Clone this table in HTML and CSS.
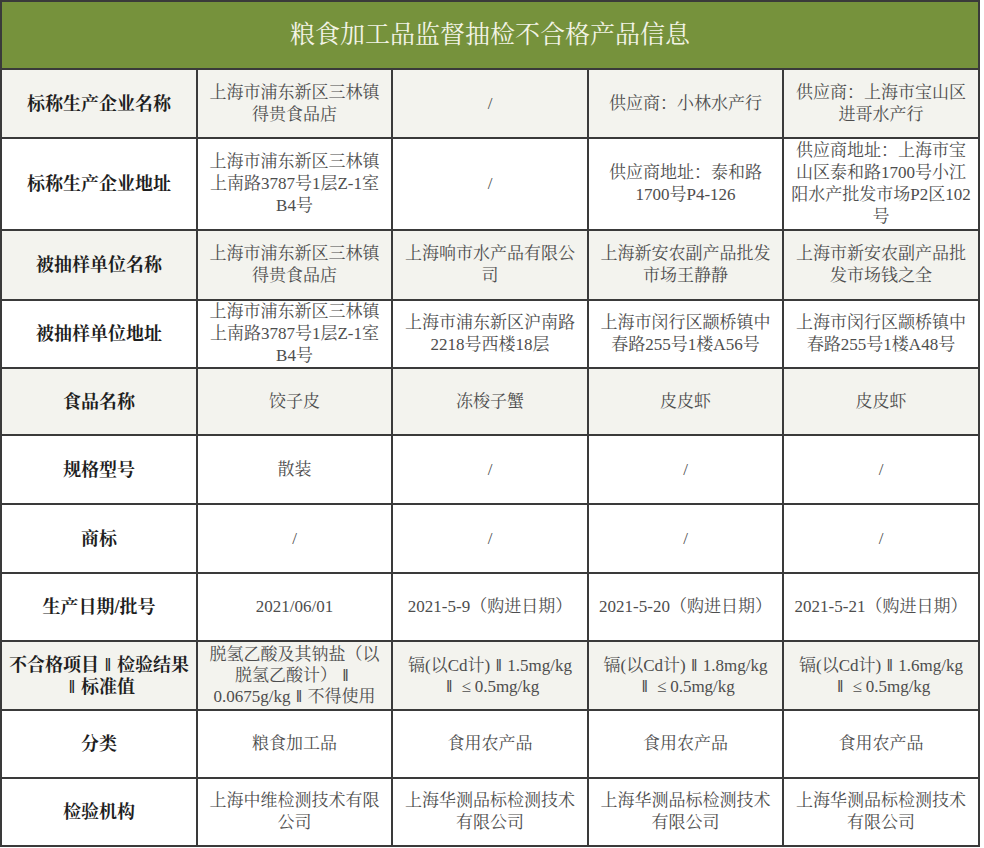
FILE: index.html
```html
<!DOCTYPE html>
<html lang="zh-CN">
<head>
<meta charset="utf-8">
<title>粮食加工品监督抽检不合格产品信息</title>
<link rel="stylesheet" href="styles.css">
</head>
<body>
<table class="sheet">
  <colgroup>
    <col class="c1"><col class="c2"><col class="c3"><col class="c4"><col class="c5">
  </colgroup>
  <thead>
    <tr class="r-title"><th colspan="5" class="title">粮食加工品监督抽检不合格产品信息</th></tr>
  </thead>
  <tbody>
    <tr class="r69 shade">
      <th>标称生产企业名称</th>
      <td>上海市浦东新区三林镇得贵食品店</td>
      <td class="slash">/</td>
      <td>供应商：小林水产行</td>
      <td>供应商：上海市宝山区进哥水产行</td>
    </tr>
    <tr class="r92">
      <th>标称生产企业地址</th>
      <td>上海市浦东新区三林镇上南路3787号1层Z-1室B4号</td>
      <td class="slash">/</td>
      <td>供应商地址：泰和路1700号P4-126</td>
      <td>供应商地址：上海市宝山区泰和路1700号小江阳水产批发市场P2区102号</td>
    </tr>
    <tr class="r70 shade">
      <th>被抽样单位名称</th>
      <td>上海市浦东新区三林镇得贵食品店</td>
      <td>上海响市水产品有限公司</td>
      <td>上海新安农副产品批发市场王静静</td>
      <td>上海市新安农副产品批发市场钱之全</td>
    </tr>
    <tr class="r68">
      <th>被抽样单位地址</th>
      <td>上海市浦东新区三林镇上南路3787号1层Z-1室B4号</td>
      <td>上海市浦东新区沪南路2218号西楼18层</td>
      <td>上海市闵行区颛桥镇中春路255号1楼A56号</td>
      <td>上海市闵行区颛桥镇中春路255号1楼A48号</td>
    </tr>
    <tr class="r67 shade">
      <th>食品名称</th>
      <td>饺子皮</td>
      <td>冻梭子蟹</td>
      <td>皮皮虾</td>
      <td>皮皮虾</td>
    </tr>
    <tr class="r69">
      <th>规格型号</th>
      <td>散装</td>
      <td class="slash">/</td>
      <td class="slash">/</td>
      <td class="slash">/</td>
    </tr>
    <tr class="r69">
      <th>商标</th>
      <td class="slash">/</td>
      <td class="slash">/</td>
      <td class="slash">/</td>
      <td class="slash">/</td>
    </tr>
    <tr class="r68">
      <th>生产日期/批号</th>
      <td>2021/06/01</td>
      <td>2021-5-9（购进日期）</td>
      <td>2021-5-20（购进日期）</td>
      <td>2021-5-21（购进日期）</td>
    </tr>
    <tr class="r69 shade tight">
      <th>不合格项目<span class="bar">‖</span>检验结果<span class="nw"><span class="bar">‖</span>标准值</span></th>
      <td>脱氢乙酸及其钠盐（以脱氢乙酸计）<span class="bar">‖</span><span class="nw">0.0675g/kg<span class="bar">‖</span></span>不得使用</td>
      <td><span class="nw">镉(以Cd计)<span class="bar">‖</span>1.5mg/kg</span> <span class="nw"><span class="bar">‖</span><span class="op">≤</span>0.5mg/kg</span></td>
      <td><span class="nw">镉(以Cd计)<span class="bar">‖</span>1.8mg/kg</span> <span class="nw"><span class="bar">‖</span><span class="op">≤</span>0.5mg/kg</span></td>
      <td><span class="nw">镉(以Cd计)<span class="bar">‖</span>1.6mg/kg</span> <span class="nw"><span class="bar">‖</span><span class="op">≤</span>0.5mg/kg</span></td>
    </tr>
    <tr class="r68">
      <th>分类</th>
      <td>粮食加工品</td>
      <td>食用农产品</td>
      <td>食用农产品</td>
      <td>食用农产品</td>
    </tr>
    <tr class="r68">
      <th>检验机构</th>
      <td>上海中维检测技术有限公司</td>
      <td>上海华测品标检测技术有限公司</td>
      <td>上海华测品标检测技术有限公司</td>
      <td>上海华测品标检测技术有限公司</td>
    </tr>
  </tbody>
</table>
</body>
</html>
```

FILE: styles.css
```css
html, body {
  margin: 0;
  padding: 0;
  background: #ffffff;
}

body {
  font-family: "Liberation Serif", "Noto Serif CJK SC", "Noto Sans CJK SC", serif;
}

.sheet {
  border-collapse: collapse;
  table-layout: fixed;
  width: 979px;
  margin: 0;
}

.c1 { width: 196px; }
.c2 { width: 195px; }
.c3 { width: 196px; }
.c4 { width: 195px; }
.c5 { width: 196px; }

.sheet th,
.sheet td {
  border: 2px solid #3a3a3a;
  text-align: center;
  vertical-align: middle;
  padding: 0 6px;
  line-height: 22px;
}

.sheet td {
  font-size: 17px;
  color: #4d4d4d;
  font-weight: normal;
}

.sheet tbody th {
  font-size: 18px;
  font-weight: bold;
  color: #1e1e1e;
  padding: 0 4px;
}

.title {
  background: #76923c;
  color: #f3f4e6;
  font-size: 25px;
  font-weight: normal;
  height: 66px;
}

.shade th,
.shade td {
  background: #f3f3ee;
}

.r67 { height: 67px; }
.r68 { height: 68px; }
.r69 { height: 69px; }
.r70 { height: 70px; }
.r92 { height: 92px; }

.tight td {
  line-height: 21px;
}

.slash {
  color: #7a7a7a;
}

.nw {
  white-space: nowrap;
}

.bar,
.op {
  display: inline-block;
  width: 1em;
  text-align: center;
  line-height: 1;
}

.bar {
  font-weight: bold;
}
```
